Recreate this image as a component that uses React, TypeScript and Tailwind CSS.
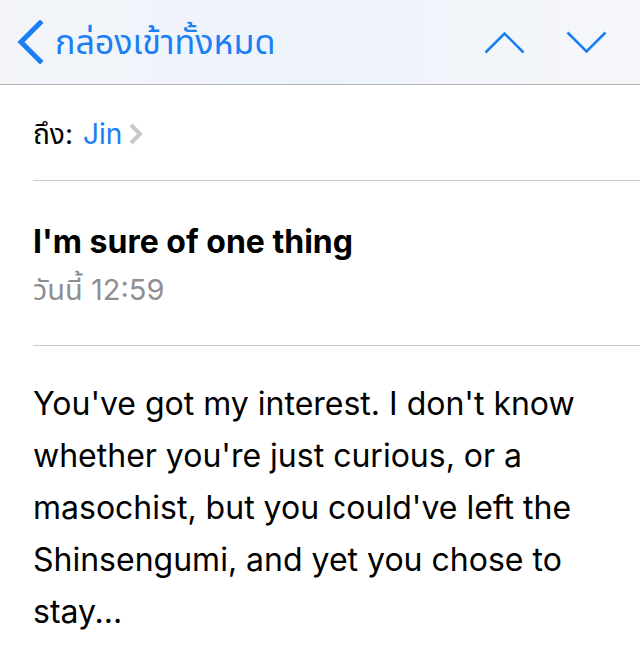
import React from 'react';

const font = { fontFamily: 'Inter, "Noto Sans", "Noto Sans Thai", "DejaVu Sans", sans-serif' };

export default function App() {
  return (
    <div className="w-[640px] h-[647px] overflow-hidden bg-white text-black" style={font}>
      {/* Nav bar */}
      <header className="h-[85px] flex items-center justify-between bg-gradient-to-r from-[#f3f5f9] via-[#eef3fb] to-[#f6f7f9] border-b border-[#b2b2b2]">
        <div className="flex items-center pl-[16px] gap-[11px]">
          <svg width="28" height="44" viewBox="0 0 28 44" fill="none">
            <path d="M24 3 L5 22 L24 41" stroke="#1a7ef5" strokeWidth="5" strokeLinecap="square" />
          </svg>
          <span className="text-[34px] text-[#1a7ef5] leading-none">กล่องเข้าทั้งหมด</span>
        </div>
        <div className="flex items-center gap-[41px] pr-[33px]">
          <svg width="41" height="23" viewBox="0 0 41 23" fill="none">
            <path d="M1.5 21.5 L20.5 2.5 L39.5 21.5" stroke="#1a7ef5" strokeWidth="2.6" />
          </svg>
          <svg width="41" height="23" viewBox="0 0 41 23" fill="none">
            <path d="M1.5 1.5 L20.5 20.5 L39.5 1.5" stroke="#1a7ef5" strokeWidth="2.6" />
          </svg>
        </div>
      </header>

      <div className="pl-[33px]">
        {/* Recipient */}
        <div className="h-[96px] flex items-center border-b border-[#c8c8cc] pt-[2px]">
          <span className="text-[28px]">ถึง:</span>
          <span className="text-[28px] text-[#1a7ef5] ml-[10px]">Jin</span>
          <svg className="ml-[6px]" width="16" height="24" viewBox="0 0 16 24" fill="none">
            <path d="M3 3 L12 12 L3 21" stroke="#c7c7cc" strokeWidth="4" />
          </svg>
        </div>

        {/* Subject */}
        <div className="h-[165px] flex flex-col justify-center border-b border-[#c8c8cc] pt-[6px]">
          <div className="text-[32px] font-bold leading-[40px]">I'm sure of one thing</div>
          <div className="text-[29px] text-[#8e8e93] leading-[40px] mt-[8px]">วันนี้ 12:59</div>
        </div>

        {/* Body */}
        <p className="pt-[32px] pr-[30px] text-[32px] leading-[52px]">
          You've got my interest. I don't know whether you're just curious, or a masochist, but you
          could've left the Shinsengumi, and yet you chose to stay...
        </p>
      </div>
    </div>
  );
}
